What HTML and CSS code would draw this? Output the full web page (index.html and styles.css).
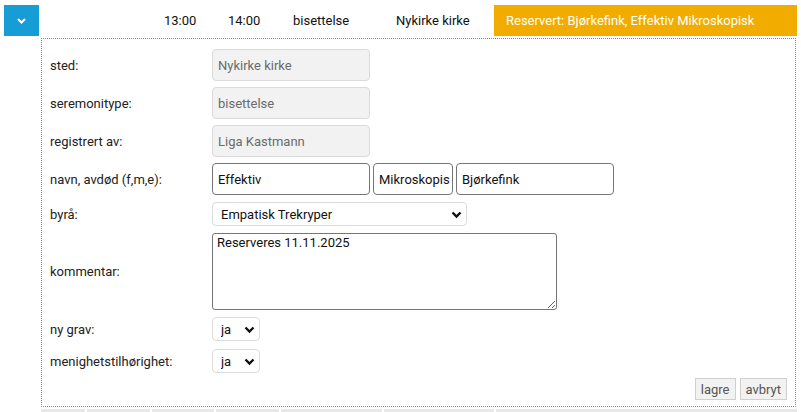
FILE: index.html
```html
<!DOCTYPE html>
<html lang="no">
<head>
<meta charset="utf-8">
<link rel="stylesheet" href="styles.css">
</head>
<body>
<div class="head">
  <button class="toggle" type="button" aria-label="lukk">
    <svg width="9" height="6" viewBox="0 0 9 6"><path d="M1 1 L4.5 4.5 L8 1" fill="none" stroke="#fff" stroke-width="2"/></svg>
  </button>
  <div class="cell c-start">13:00</div>
  <div class="cell c-end">14:00</div>
  <div class="cell c-type">bisettelse</div>
  <div class="cell c-place">Nykirke kirke</div>
  <div class="cell c-status">Reservert: Bjørkefink, Effektiv Mikroskopisk</div>
</div>

<form class="box">
  <div class="row r1">
    <label class="lbl">sted:</label>
    <input class="inp ro" type="text" value="Nykirke kirke" readonly>
  </div>
  <div class="row r1">
    <label class="lbl">seremonitype:</label>
    <input class="inp ro" type="text" value="bisettelse" readonly>
  </div>
  <div class="row r1">
    <label class="lbl">registrert av:</label>
    <input class="inp ro" type="text" value="Liga Kastmann" readonly>
  </div>
  <div class="row r2">
    <label class="lbl">navn, avdød (f,m,e):</label>
    <div class="names">
      <input class="inp ed" type="text" value="Effektiv">
      <input class="inp ed mid" type="text" value="Mikroskopisk">
      <input class="inp ed" type="text" value="Bjørkefink">
    </div>
  </div>
  <div class="row r2">
    <label class="lbl">byrå:</label>
    <div class="selwrap wide">
      <select class="sel"><option>Empatisk Trekryper</option></select>
      <svg class="chev" width="11" height="8" viewBox="0 0 11 8"><path d="M1.5 1.5 L5.5 5.5 L9.5 1.5" fill="none" stroke="#111" stroke-width="2.4"/></svg>
    </div>
  </div>
  <div class="row r2">
    <label class="lbl">kommentar:</label>
    <textarea class="txt">Reserveres 11.11.2025</textarea>
  </div>
  <div class="row r3">
    <label class="lbl">ny grav:</label>
    <div class="selwrap small">
      <select class="sel"><option>ja</option><option>nei</option></select>
      <svg class="chev" width="11" height="8" viewBox="0 0 11 8"><path d="M1.5 1.5 L5.5 5.5 L9.5 1.5" fill="none" stroke="#111" stroke-width="2.4"/></svg>
    </div>
  </div>
  <div class="row">
    <label class="lbl">menighetstilhørighet:</label>
    <div class="selwrap small">
      <select class="sel"><option>ja</option><option>nei</option></select>
      <svg class="chev" width="11" height="8" viewBox="0 0 11 8"><path d="M1.5 1.5 L5.5 5.5 L9.5 1.5" fill="none" stroke="#111" stroke-width="2.4"/></svg>
    </div>
  </div>
  <div class="actions">
    <button class="btn" type="button">lagre</button>
    <button class="btn" type="button">avbryt</button>
  </div>
</form>

<div class="next">
  <div class="nc w1"></div>
  <div class="nc w2"></div>
  <div class="nc w3"></div>
  <div class="nc w4"></div>
  <div class="nc w5"></div>
  <div class="nc w6"></div>
  <div class="nc w7"></div>
</div>
</body>
</html>
```

FILE: styles.css
```css
* { box-sizing: border-box; }
html, body { margin: 0; padding: 0; background: #fff; overflow: hidden; }
body {
  font-family: Roboto, "Liberation Sans", sans-serif;
  font-size: 13px;
  color: #222;
}

.head {
  display: flex;
  align-items: stretch;
  height: 31px;
  margin-top: 5px;
  margin-left: 4px;
}
.toggle {
  width: 35px;
  height: 31px;
  border: 0;
  padding: 0;
  margin: 0 113px 0 0;
  background: #179dd6;
  display: flex;
  align-items: center;
  justify-content: center;
}
.cell {
  display: flex;
  align-items: center;
  padding-left: 12px;
  font-size: 13px;
  color: #111;
  white-space: nowrap;
}
.c-start { width: 64px; }
.c-end { width: 65px; }
.c-type { width: 103px; }
.c-place { width: 110px; }
.c-status {
  width: 303px;
  background: #f2ac00;
  color: #fff;
}

.box {
  margin: 2px 0 0 41px;
  width: 755px;
  border: 1px dotted #8a8a8a;
  padding: 10px 8px 6px 8px;
}
.row {
  display: flex;
  align-items: center;
}
.r1 { margin-bottom: 6px; }
.r2 { margin-bottom: 7px; }
.r3 { margin-bottom: 8px; }
.lbl {
  width: 162px;
  flex: none;
  color: #222;
  font-size: 13px;
}
.inp {
  height: 32px;
  width: 158px;
  border-radius: 4px;
  padding: 0 5px;
  font-family: Roboto, "Liberation Sans", sans-serif;
  font-size: 13px;
  outline: none;
}
.ro {
  background: #f2f2f2;
  border: 1px solid #dadada;
  color: #6b6b6b;
}
.ed {
  background: #fff;
  border: 1px solid #767676;
  color: #111;
}
.names { display: flex; gap: 3px; }
.names .ed { width: 158px; }
.names .mid { width: 80px; padding: 0 2px 0 5px; }

.selwrap { position: relative; height: 24px; }
.selwrap.wide { width: 255px; }
.selwrap.small { width: 48px; }
.sel {
  -webkit-appearance: none;
  appearance: none;
  width: 100%;
  height: 24px;
  border: 1px solid #dcdcdc;
  border-radius: 4px;
  background: #fff;
  padding: 0 0 0 8px;
  font-family: Roboto, "Liberation Sans", sans-serif;
  font-size: 13px;
  color: #111;
  outline: none;
}
.chev {
  position: absolute;
  right: 5px;
  top: 9px;
  pointer-events: none;
}

.txt {
  width: 345px;
  height: 77px;
  border: 1px solid #767676;
  border-radius: 3px;
  padding: 1px 4px;
  font-family: Roboto, "Liberation Sans", sans-serif;
  font-size: 13px;
  color: #111;
  resize: both;
  outline: none;
}

.actions {
  display: flex;
  justify-content: flex-end;
  gap: 4px;
  margin-top: 5px;
}
.btn {
  height: 22px;
  padding: 0 5px;
  background: #f2f2f0;
  border: 1px solid #d0d0d0;
  border-radius: 0;
  font-family: Roboto, "Liberation Sans", sans-serif;
  font-size: 13px;
  color: #555;
}

.next {
  display: flex;
  margin: 2px 0 0 41px;
  height: 10px;
}
.nc { background: #e8e8e8; height: 10px; margin-right: 2px; }
.w1 { width: 44px; }
.w2 { width: 63px; }
.w3 { width: 62px; }
.w4 { width: 63px; }
.w5 { width: 101px; }
.w6 { width: 110px; }
.w7 { width: 301px; margin-right: 0; }
```
